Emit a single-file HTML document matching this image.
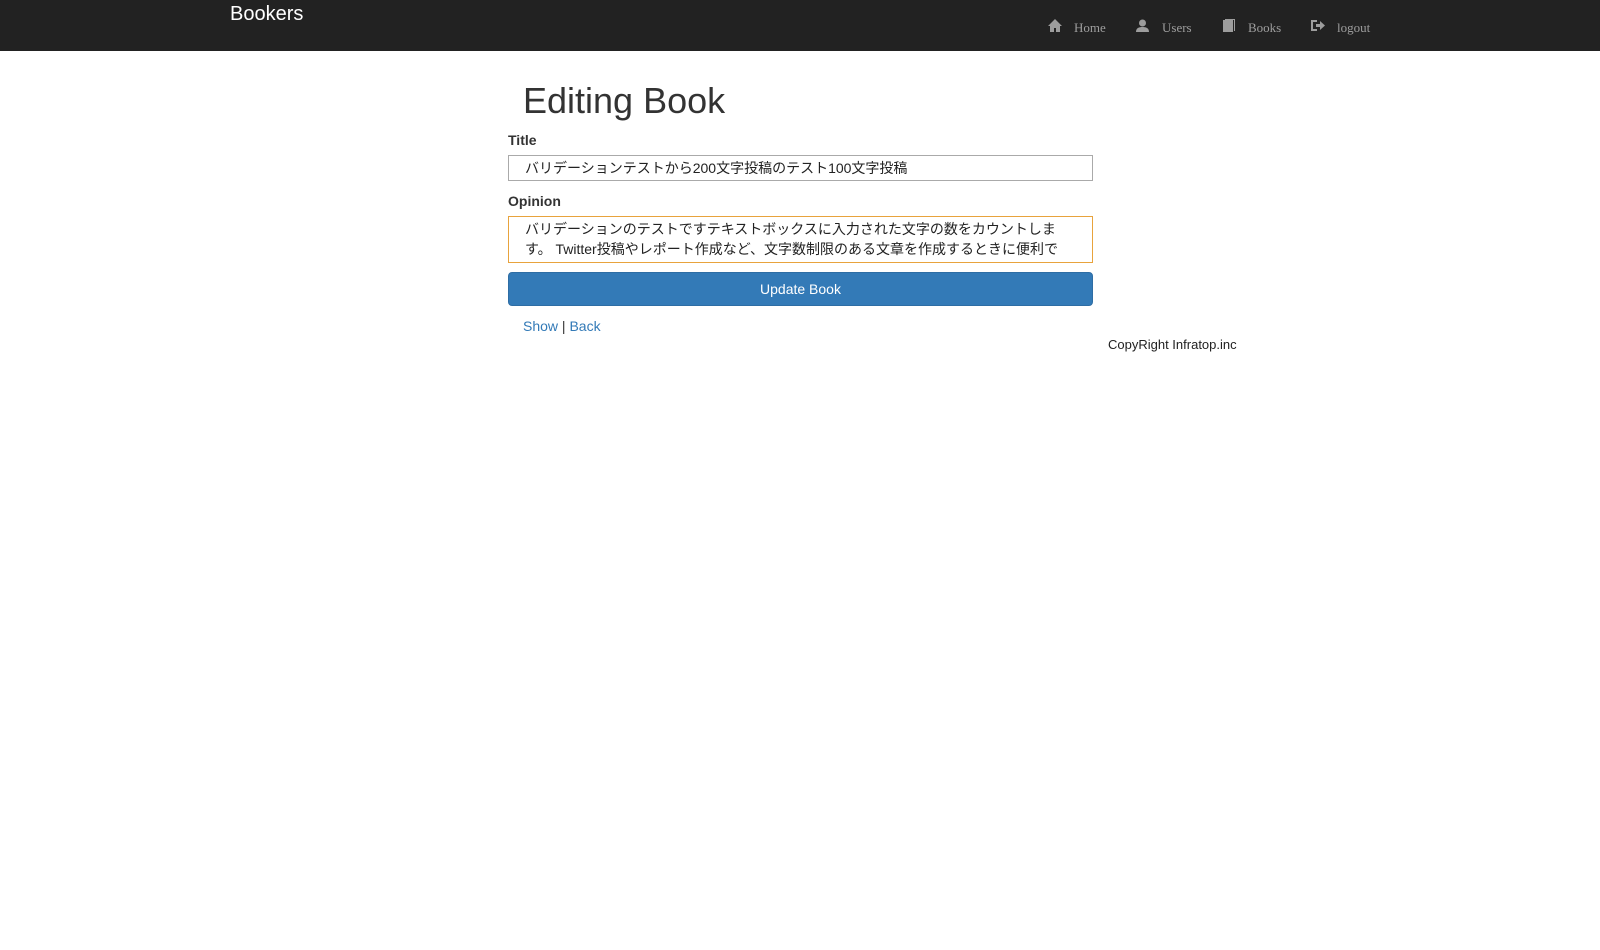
<!DOCTYPE html>
<html><head><meta charset="utf-8"><style>
body{margin:0;background:#fff;font-family:"Liberation Sans","Noto Sans CJK JP",sans-serif;font-size:14px;color:#333;}
.nav{height:51px;background:#222;position:relative;}
.brand{position:absolute;left:230px;top:3px;color:#fff;font-size:20px;}
.links{position:absolute;top:18px;font-family:"Liberation Serif",serif;font-size:13px;color:#9d9d9d;}
.links span{position:absolute;white-space:nowrap;}
.links svg{position:absolute;top:1px;fill:#9d9d9d}
h1{position:absolute;left:523px;top:79px;margin:0;font-size:36px;font-weight:500;line-height:44px;}
.lbl{position:absolute;left:508px;font-weight:bold;}
.box{position:absolute;left:508px;width:585px;box-sizing:border-box;border:1px solid #aaa;background:#fff;padding-left:16px;font-size:14px;color:#222;}
.btn{position:absolute;left:508px;top:272px;width:585px;height:34px;background:#337ab7;border:1px solid #2e6da4;border-radius:4px;box-sizing:border-box;color:#fff;text-align:center;line-height:32px;}
a{color:#337ab7;text-decoration:none}
</style></head><body>
<div class="nav"><div class="brand">Bookers</div>
<div class="links">
<svg style="left:1048px" width="14" height="13" viewBox="0 0 14 13"><path d="M7 0L0 7h2v6h4V9h2v4h4V7h2z"/></svg><span style="left:1074px;top:2px">Home</span>
<svg style="left:1136px" width="13" height="13" viewBox="0 0 13 13"><circle cx="6.5" cy="4" r="3.5"/><path d="M0 13c0-4 3-5 6.5-5S13 9 13 13z"/></svg><span style="left:1162px;top:2px">Users</span>
<svg style="left:1223px" width="12" height="13" viewBox="0 0 12 13"><path d="M0 1h10v12H0z"/><path d="M2 0h10v12h-1V1H2z"/></svg><span style="left:1248px;top:2px">Books</span>
<svg style="left:1311px" width="14" height="13" viewBox="0 0 14 13"><path d="M0 1h6v2H2v7h4v2H0z"/><path d="M5 5h4V2l5 4.5-5 4.5V8H5z"/></svg><span style="left:1337px;top:2px">logout</span>
</div></div>
<h1>Editing Book</h1>
<div class="lbl" style="top:132px">Title</div>
<div class="box" style="top:155px;height:26px;line-height:24px;">バリデーションテストから200文字投稿のテスト100文字投稿</div>
<div class="lbl" style="top:193px">Opinion</div>
<div class="box" style="top:216px;height:47px;border-color:#e8a33d;line-height:20px;padding-top:2px;padding-right:30px;overflow:hidden">バリデーションのテストですテキストボックスに入力された文字の数をカウントします。 Twitter投稿やレポート作成など、文字数制限のある文章を作成するときに便利で</div>
<div class="btn">Update Book</div>
<div style="position:absolute;left:523px;top:318px"><a>Show</a> | <a>Back</a></div>
<div style="position:absolute;left:1108px;top:337px;font-size:13px;color:#222">CopyRight Infratop.inc</div>
</body></html>
